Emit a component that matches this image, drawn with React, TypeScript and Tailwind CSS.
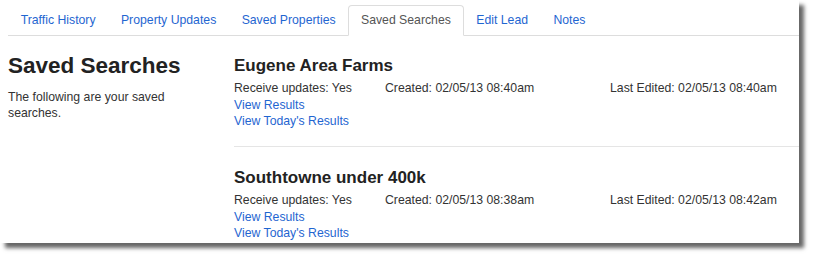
const tabs = ['Traffic History', 'Property Updates', 'Saved Properties', 'Saved Searches', 'Edit Lead', 'Notes'];

const searches = [
  { name: 'Eugene Area Farms', updates: 'Yes', created: '02/05/13 08:40am', edited: '02/05/13 08:40am' },
  { name: 'Southtowne under 400k', updates: 'Yes', created: '02/05/13 08:38am', edited: '02/05/13 08:42am' },
];

export default function App() {
  return (
    <div className="w-[815px] h-[258px] bg-white" style={{ fontFamily: '"Liberation Sans", Arial, sans-serif' }}>
      <div className="w-[799px] h-[243px] bg-white overflow-hidden pl-2 shadow-[5px_5px_4px_rgba(0,0,0,0.6)] text-[12.25px] text-[#333]">
        {/* tabs */}
        <div className="flex pt-[5px] border-b border-[#ddd]">
          {tabs.map((t) =>
            t === 'Saved Searches' ? (
              <div
                key={t}
                className="h-[31px] leading-[29px] px-[11.7px] -mb-px border border-[#ddd] border-b-white rounded-t-[4px] bg-white text-[#555]"
              >
                {t}
              </div>
            ) : (
              <div key={t} className="h-[30px] leading-[31px] px-[12.7px] text-[#1f66d1]">
                {t}
              </div>
            )
          )}
        </div>

        <div className="flex pt-[20px]">
          <div className="w-[226px] pr-6">
            <h1 className="text-[22.5px] leading-[20px] font-bold text-[#222]">Saved Searches</h1>
            <p className="mt-[13px] leading-[16px]">The following are your saved searches.</p>
          </div>

          <div className="flex-1">
            {searches.map((s, i) => (
              <div key={s.name} className={`${i === 0 ? 'pt-0' : 'pt-[21px]'} pb-[16.5px] border-b border-[#e5e5e5]`}>
                <h2 className="text-[17px] leading-[20px] font-bold text-[#222]">{s.name}</h2>
                <div className="mt-[4px] leading-[16.5px]">
                  <div className="flex">
                    <span className="w-[151px]">Receive updates: {s.updates}</span>
                    <span className="w-[225px]">Created: {s.created}</span>
                    <span>Last Edited: {s.edited}</span>
                  </div>
                  <div className="text-[#1f66d1]">View Results</div>
                  <div className="text-[#1f66d1]">View Today's Results</div>
                </div>
              </div>
            ))}
          </div>
        </div>
      </div>
    </div>
  );
}
